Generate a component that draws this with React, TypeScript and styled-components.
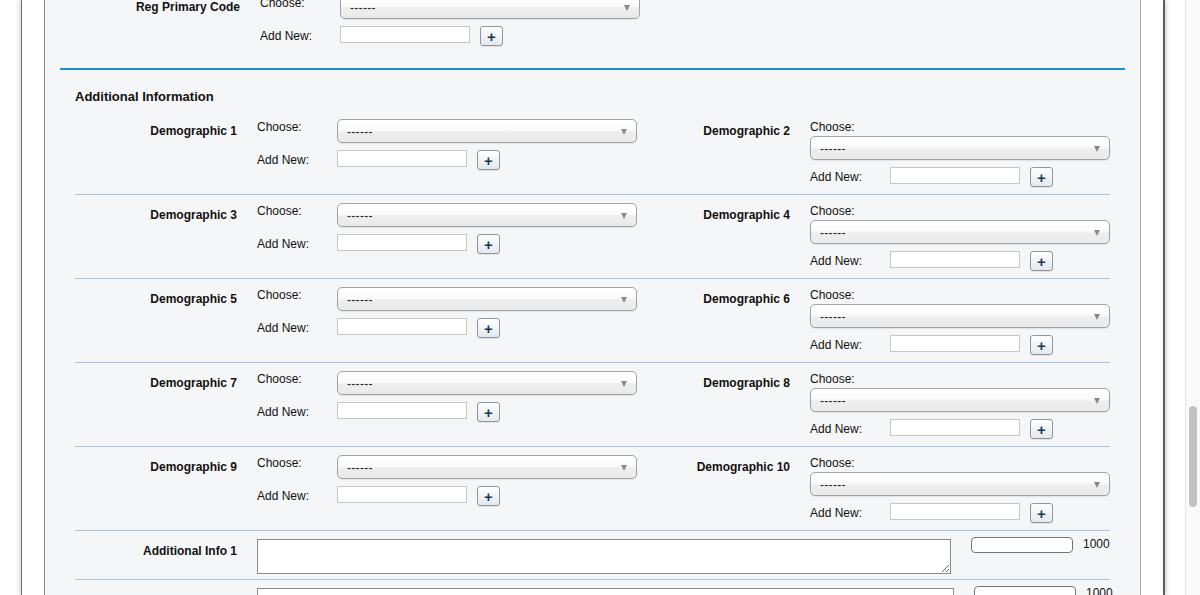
import React from 'react';
import styled, { createGlobalStyle } from 'styled-components';

const GlobalStyle = createGlobalStyle`
  html, body { margin: 0; padding: 0; height: 100%; overflow: hidden; background: #fff; }
  body {
    font-family: "Liberation Sans", Arial, Helvetica, sans-serif;
    font-size: 12px;
    color: #111;
  }
  #root { height: 100%; }
`;

const Window = styled.div`
  display: flex;
  height: 595px;
  overflow: hidden;
  background: #fff;
`;

const Frame = styled.div`
  flex-shrink: 0;
  display: flex;
  box-sizing: border-box;
  width: 1144px;
  margin-left: 21px;
  padding: 0 22px;
  background: #fff;
  border-left: 1px solid #6f6f6f;
  border-right: 2px solid #5c5c5c;
  box-shadow: 0 0 6px rgba(0, 0, 0, 0.28);
`;

const Panel = styled.main`
  flex: 1;
  overflow: hidden;
  padding: 0 15px;
  background: #f5f6f8;
  border-left: 1px solid #8a8a8a;
  border-right: 1px solid #a9a9a9;
`;

const Scrolled = styled.div`
  margin-top: -5px;
`;

const TopSection = styled.section`
  padding: 0 15px 22px;
  border-bottom: 2px solid #1590d8;
`;

const Heading = styled.h2`
  margin: 0;
  padding: 19px 15px 6px;
  font-size: 13px;
  line-height: 16px;
  font-weight: bold;
`;

const RegRow = styled.div`
  display: grid;
  grid-template-columns: 165px 380px;
  column-gap: 20px;
`;

const DemoRow = styled.div`
  display: grid;
  grid-template-columns: 162px 380px 133px 300px;
  column-gap: 20px;
  margin: 0 15px;
  padding: 8px 0 7px;
  border-bottom: 1px solid #a7c5e1;
`;

const InfoRow = styled.div`
  display: grid;
  grid-template-columns: 162px 1fr;
  column-gap: 20px;
  margin: 0 15px;
  padding: 8px 0 5px;
  border-bottom: 1px solid #a7c5e1;
`;

const RowLabel = styled.div`
  padding-top: 5px;
  line-height: 14px;
  font-weight: bold;
  text-align: right;
  white-space: nowrap;
`;

const Field = styled.div`
  display: flex;
  flex-direction: column;
`;

const Line = styled.div<{ $gap?: number }>`
  display: flex;
  align-items: flex-start;
  margin-top: ${(p) => p.$gap ?? 0}px;
`;

const InlineLabel = styled.span`
  width: 80px;
  flex-shrink: 0;
  padding-top: 1px;
  line-height: 14px;
`;

const StackLabel = styled.span`
  display: block;
  padding-top: 1px;
  margin-bottom: 2px;
  line-height: 14px;
`;

const AddLabel = styled.span`
  width: 80px;
  flex-shrink: 0;
  line-height: 20px;
`;

const SelectBox = styled.div`
  box-sizing: border-box;
  width: 300px;
  height: 24px;
  display: flex;
  align-items: center;
  justify-content: space-between;
  padding: 1px 9px 0 9px;
  border: 1px solid #a3a3a3;
  border-radius: 5px;
  background: linear-gradient(#ffffff 0%, #fbfbfb 45%, #eeeeee 55%, #eaeaea 100%);
  box-shadow: 0 1px 1px rgba(0, 0, 0, 0.08);
  font-size: 12px;
  color: #222;
  letter-spacing: 0.3px;
`;

const Caret = styled.span`
  width: 0;
  height: 0;
  border-left: 3.5px solid transparent;
  border-right: 3.5px solid transparent;
  border-top: 6px solid #8a8a8a;
`;

const TextInput = styled.input`
  box-sizing: border-box;
  width: 130px;
  height: 17px;
  margin: 0;
  padding: 0 3px;
  border: 1px solid #c6c6c6;
  background: #fff;
  font: inherit;
`;

const PlusButton = styled.button`
  box-sizing: border-box;
  width: 23px;
  height: 20px;
  margin: 0 0 0 10px;
  padding: 0;
  display: flex;
  align-items: center;
  justify-content: center;
  border: 1px solid #8b97a4;
  border-radius: 3px;
  background: linear-gradient(#ffffff, #e5e8ec);
  box-shadow: 0 1px 0 rgba(0, 0, 0, 0.08);
  color: #16395d;
  font-family: "Liberation Sans", Arial, sans-serif;
  font-weight: bold;
  font-size: 15px;
  line-height: 1;
`;

const InfoField = styled.div`
  display: flex;
  align-items: flex-start;
`;

const InfoText = styled.textarea<{ $w: number }>`
  box-sizing: border-box;
  width: ${(p) => p.$w}px;
  height: 35px;
  margin: 0;
  padding: 2px;
  border: 1px solid #8c8c8c;
  background: #fff;
  font: inherit;
  resize: both;
`;

const Counter = styled.input`
  box-sizing: border-box;
  width: 102px;
  height: 16px;
  margin: -2px 0 0 20px;
  padding: 0 3px;
  border: 1px solid #6e7680;
  border-radius: 4px;
  background: #fff;
  font: inherit;
`;

const CountText = styled.span`
  margin: -2px 0 0 10px;
  line-height: 14px;
`;

const ScrollTrack = styled.div`
  flex-shrink: 0;
  width: 15px;
  box-sizing: border-box;
  margin-left: 20px;
  border-left: 1px solid #e6e6e6;
  background: #f9f9f9;
`;

const ScrollThumb = styled.div`
  width: 8px;
  height: 101px;
  margin: 406px 0 0 3px;
  border-radius: 4px;
  background: #c2c2c2;
`;

const Select = () => (
  <SelectBox role="combobox">
    <span>------</span>
    <Caret />
  </SelectBox>
);

const AddNew = () => (
  <Line $gap={7}>
    <AddLabel>Add New:</AddLabel>
    <TextInput type="text" />
    <PlusButton type="button">+</PlusButton>
  </Line>
);

const InlineChoice = () => (
  <Field>
    <Line>
      <InlineLabel>Choose:</InlineLabel>
      <Select />
    </Line>
    <AddNew />
  </Field>
);

const StackedChoice = () => (
  <Field>
    <StackLabel>Choose:</StackLabel>
    <Select />
    <AddNew />
  </Field>
);

const pairs = [
  [1, 2],
  [3, 4],
  [5, 6],
  [7, 8],
  [9, 10],
];

export default function App() {
  return (
    <>
      <GlobalStyle />
      <Window>
        <Frame>
          <Panel>
            <Scrolled>
              <TopSection>
                <RegRow>
                  <RowLabel>Reg Primary Code</RowLabel>
                  <InlineChoice />
                </RegRow>
              </TopSection>
              <Heading>Additional Information</Heading>
              {pairs.map(([a, b]) => (
                <DemoRow key={a}>
                  <RowLabel>Demographic {a}</RowLabel>
                  <InlineChoice />
                  <RowLabel>Demographic {b}</RowLabel>
                  <StackedChoice />
                </DemoRow>
              ))}
              {[1, 2].map((n) => (
                <InfoRow key={n}>
                  <RowLabel>Additional Info {n}</RowLabel>
                  <InfoField>
                    <InfoText $w={n === 1 ? 694 : 697} />
                    <Counter type="text" readOnly />
                    <CountText>1000</CountText>
                  </InfoField>
                </InfoRow>
              ))}
            </Scrolled>
          </Panel>
        </Frame>
        <ScrollTrack>
          <ScrollThumb />
        </ScrollTrack>
      </Window>
    </>
  );
}
